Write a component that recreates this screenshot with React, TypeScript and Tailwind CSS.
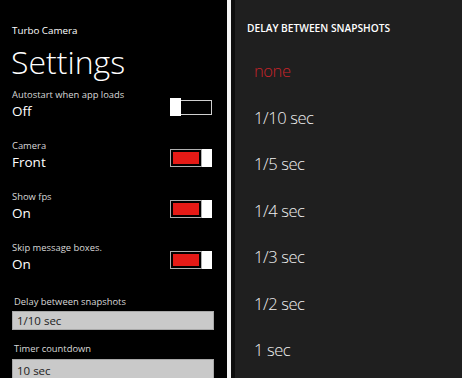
import React from "react";

const font = { fontFamily: '"Open Sans", "Noto Sans", sans-serif' };

function Toggle({ on }: { on: boolean }) {
  if (on) {
    return (
      <div className="mt-[11px] flex h-[18px] w-[42px] items-stretch">
        <div className="flex-1 border border-[#b0b0b0] bg-black p-[2px]">
          <div className="h-full w-full bg-[#e51a16]" />
        </div>
        <div className="w-[10px] bg-white" />
      </div>
    );
  }
  return (
    <div className="mt-[11px] flex h-[18px] w-[42px] items-center">
      <div className="h-full w-[11px] bg-white" />
      <div className="h-[15px] flex-1 border border-[#d0d0d0] border-l-0 bg-black" />
    </div>
  );
}

function Row({ label, value, on }: { label: string; value: string; on: boolean }) {
  return (
    <div className="flex h-[51px] items-start justify-between pr-[15px]">
      <div className="flex flex-col">
        <div className="text-[9.4px] leading-[16px] text-[#d8d8d8]">{label}</div>
        <div className="text-[13.5px] leading-[16px] text-white">{value}</div>
      </div>
      <Toggle on={on} />
    </div>
  );
}

const items = ["none", "1/10 sec", "1/5 sec", "1/4 sec", "1/3 sec", "1/2 sec", "1 sec"];

export default function App() {
  return (
    <div className="flex h-[378px] w-[462px] overflow-hidden bg-black" style={font}>
      <div className="flex w-[227px] shrink-0 flex-col bg-black pl-[12px]">
        <div className="mt-[24px] text-[9.8px] leading-[14px] text-white">Turbo Camera</div>
        <div className="-ml-[1px] mt-[0px] text-[32px] font-light leading-[48px] text-white">Settings</div>
        <div className="mt-[1px]">
          <Row label="Autostart when app loads" value="Off" on={false} />
          <Row label="Camera" value="Front" on={true} />
          <Row label="Show fps" value="On" on={true} />
          <Row label="Skip message boxes." value="On" on={true} />
        </div>
        <div className="mt-[3px] pl-[2px] text-[9.4px] leading-[16px] text-[#d8d8d8]">Delay between snapshots</div>
        <div className="mt-[1px] flex h-[24px] w-[202px] items-center border border-[#a8a8a8] bg-[#c9c9c9] pl-[4px] text-[11.5px] text-[#1c1c1c]">
          1/10 sec
        </div>
        <div className="mt-[11px] pl-[2px] text-[9.4px] leading-[16px] text-[#d8d8d8]">Timer countdown</div>
        <div className="mt-[2px] flex h-[24px] w-[202px] shrink-0 items-start border border-[#a8a8a8] bg-[#c9c9c9] pl-[4px] pt-[3px] text-[11.5px] leading-[16px] text-[#1c1c1c]">
          10 sec
        </div>
      </div>
      <div className="w-[4px] shrink-0 bg-[#f4f4f4]" />
      <div className="w-[4px] shrink-0 bg-[#0e0e0e]" />
      <div className="flex flex-1 flex-col bg-[#1f1f1f]">
        <div className="mt-[21px] pl-[12px] text-[10.2px] font-semibold leading-[14px] text-white">
          DELAY BETWEEN SNAPSHOTS
        </div>
        <div className="mt-[13.5px] flex flex-col pl-[19px]">
          {items.map((it, i) => (
            <div
              key={it}
              className={
                "flex h-[46.5px] items-center text-[16.5px] font-light tracking-[-0.4px] " +
                (i === 0 ? "text-[#c8242a]" : "text-[#f0f0f0]")
              }
            >
              {it}
            </div>
          ))}
        </div>
      </div>
    </div>
  );
}
